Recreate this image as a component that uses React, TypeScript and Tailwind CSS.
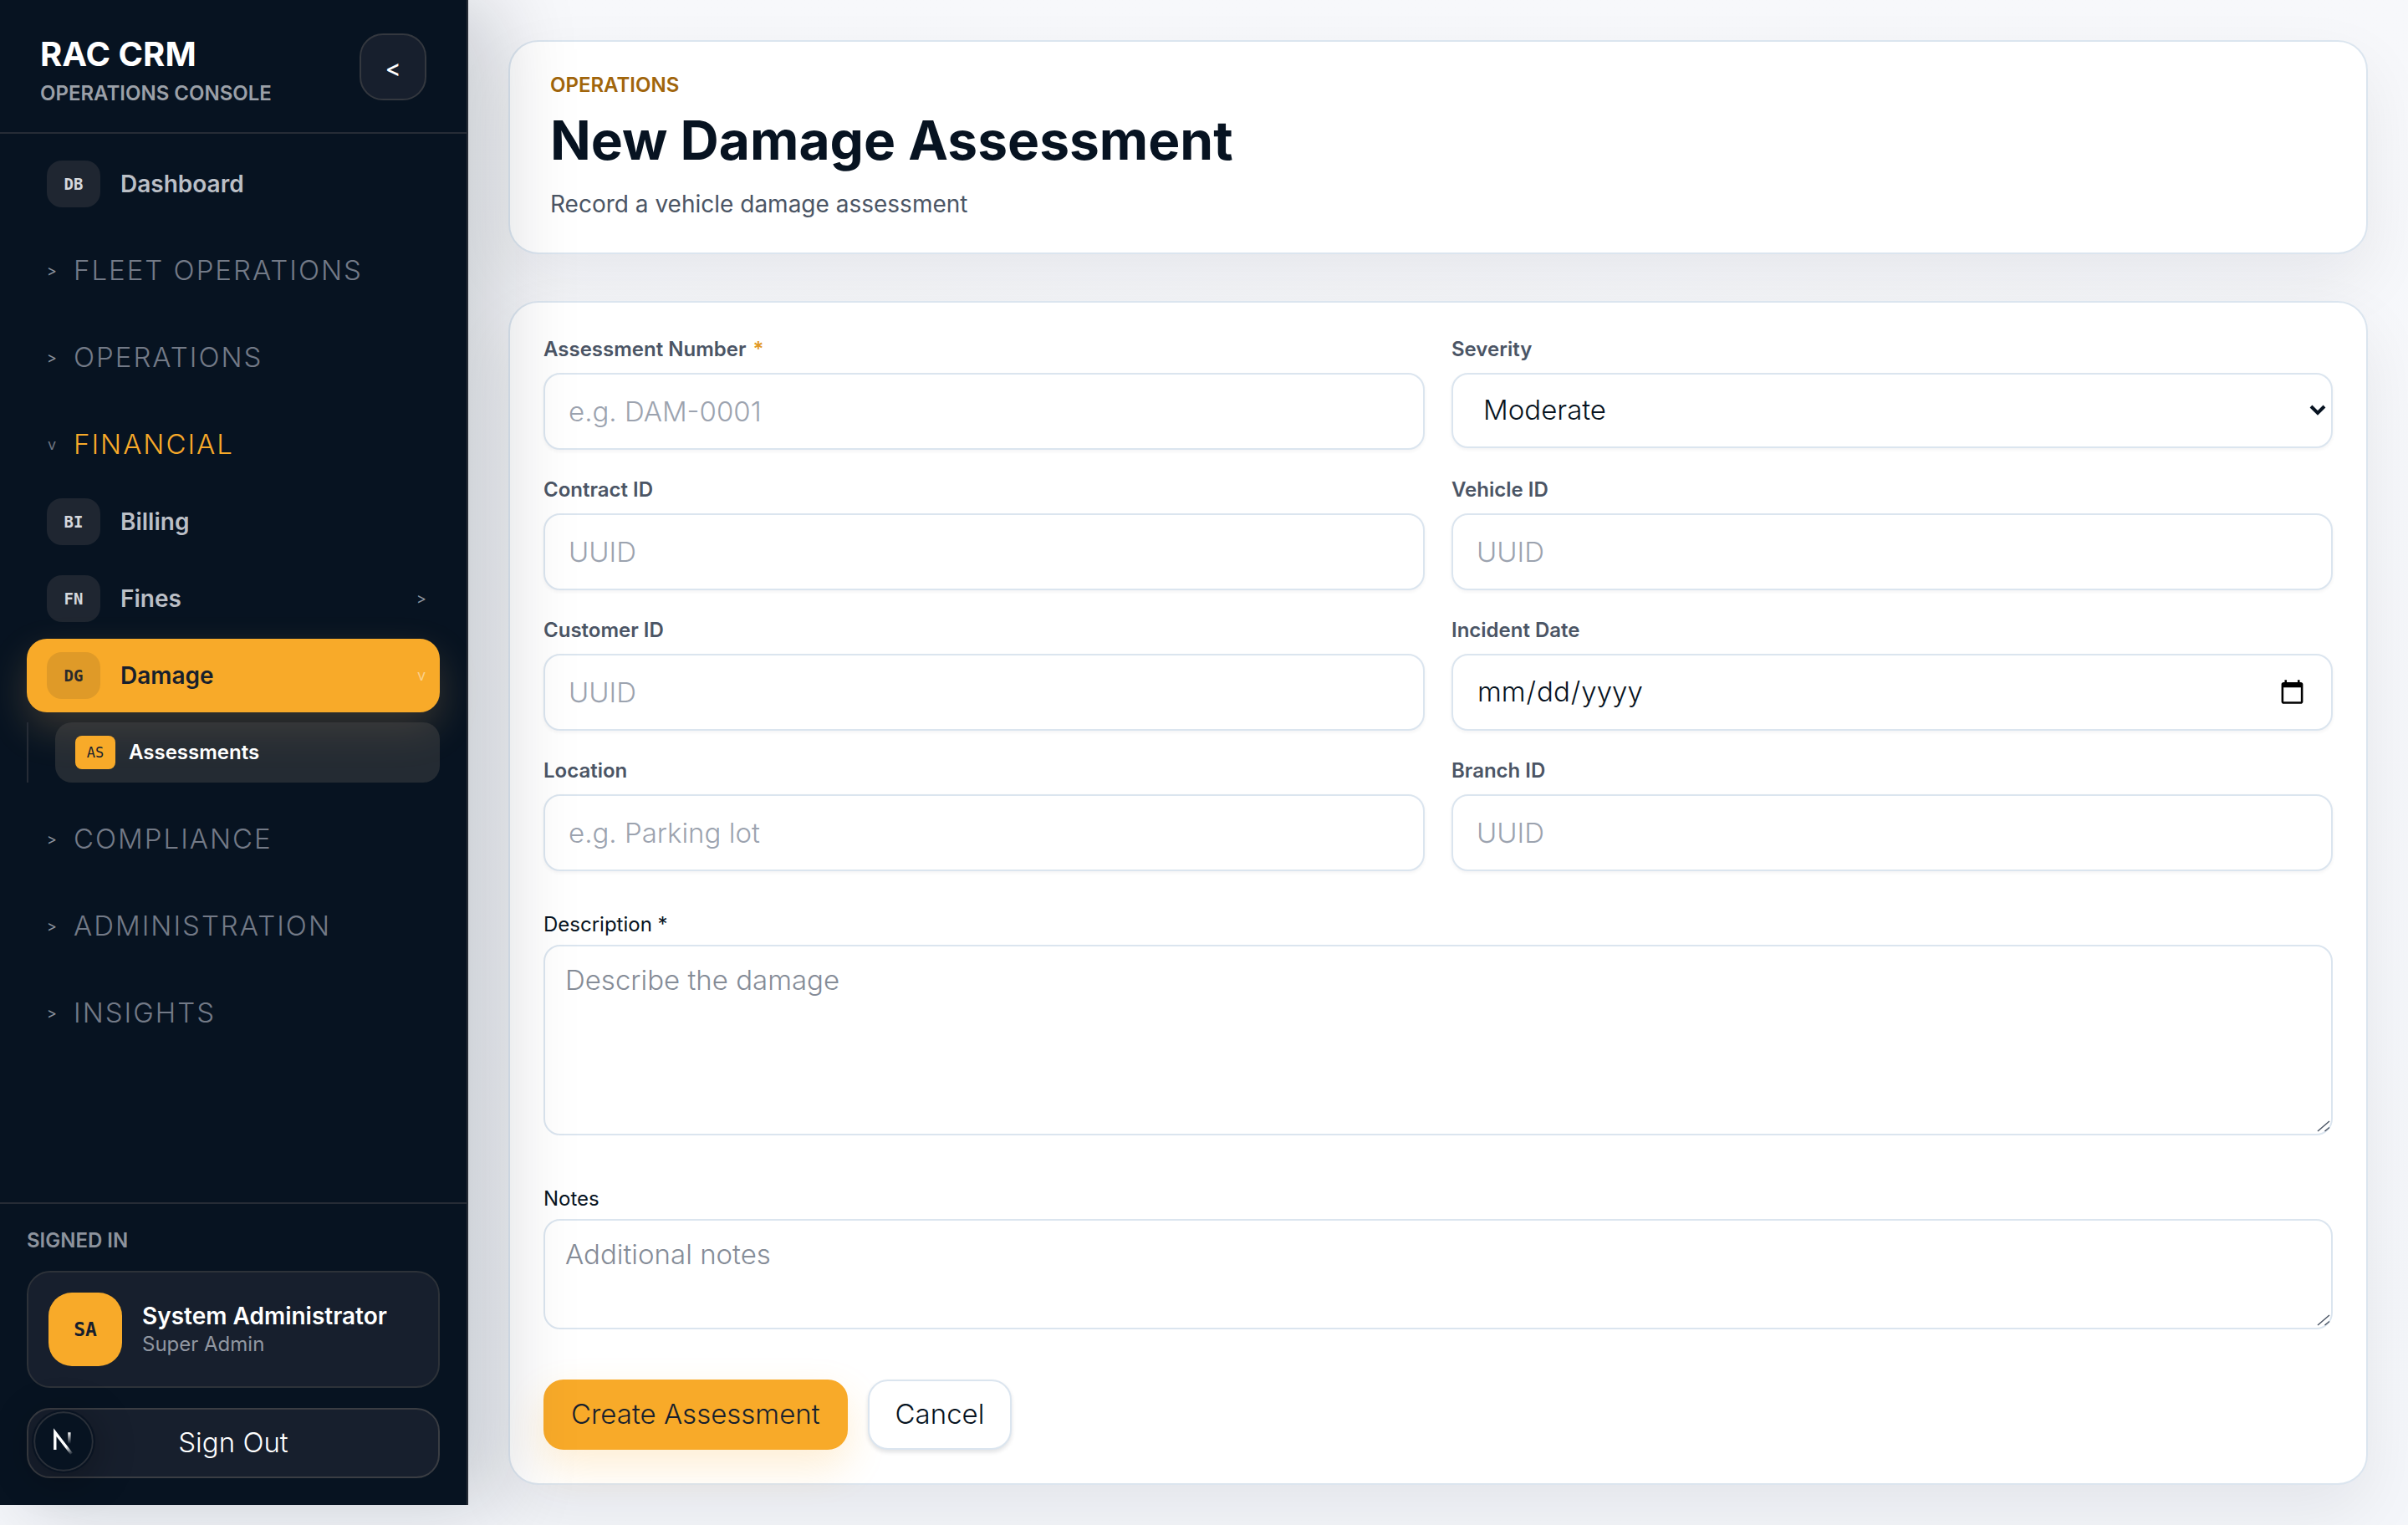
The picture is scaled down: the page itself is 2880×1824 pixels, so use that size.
import { useState } from 'react';
import clsx from 'clsx';

const monoFont = "font-['DejaVu_Sans_Mono',monospace]";
const fieldBase = 'w-full border-2 border-[#dbe5ef] bg-white rounded-[20px] text-[33px] font-light text-[#071321] outline-none focus:border-[#f8aa29]';

function Caret({ open, className }: { open: boolean; className: string }) {
  return <span className={clsx('w-3 text-lg leading-none text-center', className)}>{open ? 'v' : '>'}</span>;
}

function NavItem({ code, label, active, open }: { code: string; label: string; active?: boolean; open?: boolean }) {
  return (
    <a href="#" className={clsx('flex items-center gap-6 h-22 pl-6 pr-4 rounded-3xl text-[28px] font-semibold',
      active ? 'bg-[#f8aa29] text-[#171f2d] shadow-[0_20px_48px_rgba(248,190,110,0.2)]' : 'text-[#bbbfc6]')}>
      <span className={clsx('flex items-center justify-center w-16 h-14 rounded-[18px] text-[19px] font-bold', monoFont,
        active ? 'bg-[#df9a28] text-[#2b2a2b]' : 'bg-[#1f2631] text-[#d5d8dd]')}>
        {code}
      </span>
      <span className="flex-1">{label}</span>
      {open !== undefined && <Caret open={open} className={active ? 'font-normal text-[#fbd08a]' : 'font-normal text-[#8d939d]'} />}
    </a>
  );
}

function NavSection({ label, open }: { label: string; open?: boolean }) {
  return (
    <button type="button" className="flex items-center gap-5 w-full h-20 pl-6 text-left">
      <Caret open={!!open} className={open ? 'text-[#6f7683]' : 'text-[#8d939d]'} />
      <span className={clsx('text-[33px] font-light tracking-[2px] uppercase', open ? 'text-[#f8aa29]' : 'text-[#737a87]')}>{label}</span>
    </button>
  );
}

function NextBadge() {
  return (
    <svg viewBox="0 0 40 40" fill="none" className="absolute left-10 bottom-10 w-18 h-18 rounded-full shadow-[0_0_0_2px_#0a1422,0_8px_48px_rgba(0,0,0,0.35)]">
      <defs>
        <linearGradient id="diag" x1="9.8" y1="10.6" x2="13.6" y2="15.8" gradientUnits="userSpaceOnUse">
          <stop stopColor="#fff" />
          <stop offset="1" stopColor="#fff" stopOpacity="0" />
        </linearGradient>
        <linearGradient id="stem" x1="11.8" y1="1" x2="11.8" y2="8.6" gradientUnits="userSpaceOnUse">
          <stop stopColor="#fff" />
          <stop offset="1" stopColor="#fff" stopOpacity="0" />
        </linearGradient>
      </defs>
      <circle cx="20" cy="20" r="19.3" fill="#071321" stroke="#2a3039" strokeWidth="1" />
      <g transform="translate(12 13)" strokeWidth="1.86">
        <path d="M13.3 15.2 L2.34 1 V12.6" stroke="url(#diag)" strokeLinejoin="miter" />
        <path d="M11.825 1 V9" stroke="url(#stem)" />
      </g>
    </svg>
  );
}

function Sidebar() {
  return (
    <aside className="sticky top-0 z-10 flex flex-col shrink-0 w-[560px] h-[calc(100vh-24px)] bg-[#071321] border-r-2 border-[#262c36] shadow-[36px_0_90px_rgba(7,19,33,0.18)]">
      <div className="flex items-start justify-between h-40 pt-10 px-12 border-b-2 border-[#262c36]">
        <div>
          <p className="text-[40px] leading-[50px] font-bold text-white">RAC CRM</p>
          <p className="text-2xl leading-[44px] font-semibold text-[#9ba0a8]">OPERATIONS CONSOLE</p>
        </div>
        <button type="button" aria-label="Collapse sidebar" className="w-20 h-20 pt-1 rounded-[28px] border-2 border-[#34383f] bg-[#171f2d] text-[28px] font-medium text-white">&lt;</button>
      </div>

      <nav className="flex flex-col flex-1 gap-6 min-h-0 pt-4 pl-8 pr-8">
        <div className="-mb-1">
          <NavItem code="DB" label="Dashboard" />
        </div>
        <NavSection label="Fleet Operations" />
        <NavSection label="Operations" />
        <div className="flex flex-col gap-1 pb-1">
          <div className="pb-1">
            <NavSection label="Financial" open />
          </div>
          <NavItem code="BI" label="Billing" />
          <NavItem code="FN" label="Fines" open={false} />
          <NavItem code="DG" label="Damage" active open />
          <div className="mt-2 pl-8 border-l-2 border-[#262c36]">
            <a href="#" className="flex items-center gap-4 h-18 pl-6 rounded-[20px] bg-[#4a4a4a]/45 text-2xl font-semibold text-white">
              <span className={clsx('flex items-center justify-center w-12 h-10 rounded-lg bg-[#f8aa29] text-[17px] font-normal text-[#171f2d]', monoFont)}>AS</span>
              Assessments
            </a>
          </div>
        </div>
        <NavSection label="Compliance" />
        <NavSection label="Administration" />
        <NavSection label="Insights" />
      </nav>

      <div className="pt-7 pb-8 px-8 border-t-2 border-[#262c36]">
        <p className="mb-5 text-2xl font-semibold text-[#8d939d]">SIGNED IN</p>
        <div className="flex items-center gap-6 p-6 mb-6 rounded-[28px] border-2 border-[#2d3239] bg-[#171f2d]">
          <span className={clsx('flex items-center justify-center w-22 h-22 rounded-[28px] bg-[#f8aa29] text-[23px] font-bold text-[#171f2d]', monoFont)}>SA</span>
          <div>
            <p className="text-[28px] leading-9 font-semibold text-white">System Administrator</p>
            <p className="text-2xl text-[#9197a1]">Super Admin</p>
          </div>
        </div>
        <button type="button" className="w-full h-21 rounded-[28px] border-2 border-[#3a3d43] bg-[#171f2d] text-[33px] font-light text-white">Sign Out</button>
      </div>
      <NextBadge />
    </aside>
  );
}

function Field({ id, label, required, children }: { id: string; label: string; required?: boolean; children: React.ReactNode }) {
  return (
    <div className="flex flex-col gap-3">
      <label htmlFor={id} className="text-2xl font-semibold text-[#4b5565]">
        {label}
        {required && <span className="ml-2 text-[#e29a26]">*</span>}
      </label>
      {children}
    </div>
  );
}

function TextInput({ id, label, placeholder, type = 'text', required }: { id: string; label: string; placeholder?: string; type?: string; required?: boolean }) {
  return (
    <Field id={id} label={label} required={required}>
      <input id={id} type={type} placeholder={placeholder}
        className={clsx(fieldBase, 'h-23 px-7 shadow-[0_2px_4px_rgba(7,19,33,0.05)] placeholder:text-[#9ca3af]')} />
    </Field>
  );
}

function TextArea({ id, label, placeholder, className }: { id: string; label: string; placeholder: string; className: string }) {
  return (
    <div className="flex flex-col gap-2 pb-3">
      <label htmlFor={id} className="text-2xl text-[#071321]">{label}</label>
      <div className="relative flex">
        <textarea id={id} placeholder={placeholder} className={clsx(fieldBase, 'resize-none px-6 py-[18px] leading-[44px] placeholder:text-[#858c97]', className)} />
        {/* resize grip */}
        <svg viewBox="0 0 16 16" className="absolute right-[3px] bottom-[3px] w-4 h-4" stroke="#4b5565" strokeWidth="1.5">
          <path d="M1 14 L15 2 M9.500 14 L15 9.500" />
        </svg>
      </div>
    </div>
  );
}

export default function App() {
  const [severity, setSeverity] = useState('Moderate');

  return (
    <div className="flex items-start min-h-screen bg-linear-to-b from-[#f7f8fb] to-[#f4f6fa] font-[Inter,sans-serif] text-[#071321]">
      <Sidebar />
      <main className="flex flex-col flex-1 gap-14 min-w-0 p-12">
        <header className="pt-[34px] pb-9 px-12 rounded-[36px] border-2 border-[#dbe5ef] bg-white shadow-[0_32px_80px_rgba(7,19,33,0.07)]">
          <p className="mb-3 text-2xl leading-9 font-semibold text-[#a1650b]">OPERATIONS</p>
          <h1 className="text-[64px] leading-[72px] font-bold">New Damage Assessment</h1>
          <p className="mt-[18px] text-[28px] leading-[44px] text-[#4b5565]">Record a vehicle damage assessment</p>
        </header>

        <form onSubmit={e => e.preventDefault()} className="flex flex-col gap-12 p-10 rounded-[36px] border-2 border-[#dbe5ef] bg-white shadow-[0_32px_80px_rgba(7,19,33,0.07)]">
          <div className="grid grid-cols-2 gap-8">
            <TextInput id="number" label="Assessment Number" placeholder="e.g. DAM-0001" required />
            <Field id="severity" label="Severity">
              <div className="relative">
                <select id="severity" value={severity} onChange={e => setSeverity(e.target.value)}
                  className={clsx(fieldBase, 'block appearance-none h-[90px] pl-9 pr-12 shadow-[0_2px_4px_rgba(7,19,33,0.05)]')}>
                  {['Minor', 'Moderate', 'Severe'].map(s => <option key={s}>{s}</option>)}
                </select>
                <svg viewBox="0 0 20 14" fill="none" className="absolute right-2 top-[38px] w-5 h-[14px] pointer-events-none">
                  <path d="M2 2 L10 10 L18 2" stroke="#071321" strokeWidth="4" />
                </svg>
              </div>
            </Field>
            <TextInput id="contract" label="Contract ID" placeholder="UUID" />
            <TextInput id="vehicle" label="Vehicle ID" placeholder="UUID" />
            <TextInput id="customer" label="Customer ID" placeholder="UUID" />
            <TextInput id="incident" label="Incident Date" type="date" />
            <TextInput id="location" label="Location" placeholder="e.g. Parking lot" />
            <TextInput id="branch" label="Branch ID" placeholder="UUID" />
          </div>

          <TextArea id="description" label="Description *" placeholder="Describe the damage" className="h-57" />
          <TextArea id="notes" label="Notes" placeholder="Additional notes" className="h-33" />

          <div className="flex gap-6">
            <button type="submit" className="h-21 px-[31px] rounded-3xl border-2 border-[#f8aa29] bg-[#f8aa29] text-[33px] font-light text-[#171f2d] shadow-[0_20px_48px_rgba(248,170,41,0.2)]">Create Assessment</button>
            <button type="button" className="h-21 px-[31px] rounded-3xl border-2 border-[#dbe5ef] bg-white text-[33px] font-light shadow-[0_3px_5px_rgba(7,19,33,0.12)]">Cancel</button>
          </div>
        </form>
      </main>
    </div>
  );
}
